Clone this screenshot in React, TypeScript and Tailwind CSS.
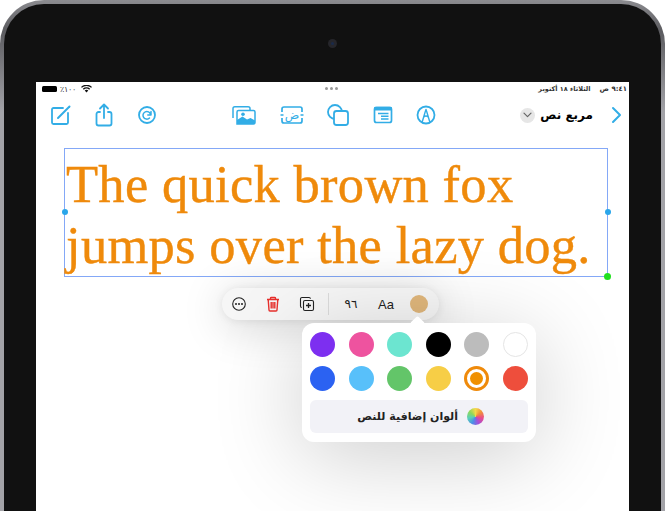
const ICON = "#32ade6";

const ROW_ONE = ["bg-[#7d2ff0]", "bg-[#ee539f]", "bg-[#6ce5d0]", "bg-black", "bg-[#bcbcbc]", "bg-white border border-[#e5e5e5]"];
const ROW_TWO = ["bg-[#2b62f2]", "bg-[#58c0fa]", "bg-[#63c569]", "bg-[#f7ce46]", "selected", "bg-[#ee4e3c]"];

function ToolIcon({ children, className }: { children: React.ReactNode; className?: string }) {
  return (
    <svg width="24" height="24" viewBox="0 0 24 24" fill="none" stroke={ICON} strokeWidth="1.8" strokeLinecap="round" strokeLinejoin="round" className={className}>
      {children}
    </svg>
  );
}

function StatusBar() {
  return (
    <div className="relative flex h-[14px] items-center justify-between pl-[4px] pr-[2px] text-[8px] text-black">
      <div className="flex items-center gap-[3px]">
        <span className="flex h-[7px] w-[17px] items-center justify-end">
          <span className="h-[6px] w-[15px] rounded-[1.5px] bg-black" />
        </span>
        <span className="text-[8px] leading-none text-[#333]">٪١٠٠</span>
        <svg width="11" height="8" viewBox="0 0 11 8" className="ml-[2px]">
          <path d="M5.5 7.6 3.7 5.6a2.6 2.6 0 0 1 3.6 0ZM2.8 4.7l-1-1a5.4 5.4 0 0 1 7.4 0l-1 1a4 4 0 0 0-5.4 0ZM.9 2.8 0 1.9a7.9 7.9 0 0 1 11 0l-.9.9a6.6 6.6 0 0 0-9.2 0Z" fill="#111" />
        </svg>
      </div>
      <div className="absolute left-[289px] top-[5px] flex gap-[2px]">
        <span className="h-[3px] w-[3px] rounded-full bg-[#999]" />
        <span className="h-[3px] w-[3px] rounded-full bg-[#999]" />
        <span className="h-[3px] w-[3px] rounded-full bg-[#999]" />
      </div>
      <div dir="rtl" className="flex items-center gap-[9px] font-['DejaVu_Sans',sans-serif] text-[7px] font-bold leading-none text-[#333]">
        <span>٩:٤١ ص</span>
        <span className="text-[6.5px]">الثلاثاء ١٨ أكتوبر</span>
      </div>
    </div>
  );
}

function Toolbar() {
  return (
    <div className="flex h-[38px] items-center pl-[12px] pr-[5px]">
      <div className="flex items-center gap-[20px]">
        <ToolIcon>
          <path d="M15 5H5.500A1.500 1.500 0 0 0 4 6.500V19.500A1.500 1.500 0 0 0 5.500 21H18.500A1.500 1.500 0 0 0 20 19.500V10" />
          <path d="M10 15 21.500 3.500" strokeWidth="2" />
        </ToolIcon>
        <ToolIcon>
          <path d="M8 9H6.500A2 2 0 0 0 4.500 11V20.500A2 2 0 0 0 6.500 22.500H17.500A2 2 0 0 0 19.500 20.500V11A2 2 0 0 0 17.500 9H16" />
          <path d="M12 15V2M8 5.500 12 1.500 16 5.500" />
        </ToolIcon>
        <ToolIcon className="-ml-[1px]">
          <circle cx="12" cy="12" r="8" />
          <path d="M15.500 11.500A3.800 3.800 0 1 0 14.500 15M16 8.500V12H12.800" strokeWidth="1.500" />
        </ToolIcon>
      </div>
      <div className="ml-[72px] flex items-center">
        <svg width="26" height="24" viewBox="0 0 24 24" fill="none" stroke={ICON} strokeWidth="1.500">
          <path d="M1 15V5.500A1.800 1.800 0 0 1 2.800 3.700H16A1.800 1.800 0 0 1 18 5.500V7" />
          <path d="M5 21H21.500A1.500 1.500 0 0 0 23 19.500V9A1.500 1.500 0 0 0 21.500 7.500H6.500A1.500 1.500 0 0 0 5 9Z" />
          <path d="M5 21V17L10.500 13.500 15 16.500 18.500 15 23 17.500V21Z" fill={ICON} stroke="none" />
          <circle cx="11" cy="11.300" r="1.800" fill={ICON} stroke="none" />
        </svg>
        <svg width="24" height="24" viewBox="0 0 24 24" fill="none" stroke={ICON} strokeWidth="1.700" className="ml-[23px]">
          <path d="M2 9V6A2 2 0 0 1 4 4H20A2 2 0 0 1 22 6V9M22 15V18A2 2 0 0 1 20 20H4A2 2 0 0 1 2 18V15" />
          <path d="M0.500 12H3.500M20.500 12H23.500" />
          <text x="12" y="16" textAnchor="middle" fontSize="12" fill={ICON} stroke="none" fontFamily="DejaVu Sans, sans-serif">ض</text>
        </svg>
        <ToolIcon className="ml-[22px]">
          <circle cx="9" cy="9" r="7" />
          <rect x="8" y="8" width="14" height="14" rx="2.500" fill="#fff" />
        </ToolIcon>
        <svg width="24" height="24" viewBox="0 0 24 24" fill="none" className="ml-[21px]">
          <rect x="3.500" y="4.500" width="17" height="15" rx="2" stroke={ICON} strokeWidth="1.700" />
          <path d="M3 7.500H21V4.500A1.500 1.500 0 0 0 19.500 3.800H4.500A1.500 1.500 0 0 0 3 4.500Z" fill={ICON} />
          <path d="M7 10.500H17.500M10 13.300H17.500M10 16H17.500" stroke={ICON} strokeWidth="1.400" />
        </svg>
        <ToolIcon className="ml-[19px]">
          <circle cx="12" cy="12" r="8.500" />
          <path d="M8.200 19 11 9.500 12 6.500 13 9.500 15.800 19M9.700 14A3 3 0 0 1 14.300 14" strokeWidth="1.400" />
        </ToolIcon>
      </div>
      <div dir="rtl" className="ml-auto flex items-center font-['DejaVu_Sans',sans-serif]">
        <svg width="16" height="20" viewBox="0 0 16 20" fill="none" stroke={ICON} strokeWidth="2" strokeLinecap="round" strokeLinejoin="round" className="ml-[15px]">
          <path d="M5 3 12 10 5 17" />
        </svg>
        <span className="text-[12px] font-bold leading-none text-black">مربع نص</span>
        <span className="mr-[5px] flex h-[15px] w-[15px] items-center justify-center rounded-full bg-[#e6e6e6]">
          <svg width="9" height="6" viewBox="0 0 9 6" fill="none" stroke="#666" strokeWidth="1.200" strokeLinecap="round" strokeLinejoin="round">
            <path d="M1 1.200 4.500 4.700 8 1.200" />
          </svg>
        </span>
      </div>
    </div>
  );
}

function TextBox() {
  return (
    <div className="relative ml-[28px] h-[129px] w-[544px] border border-[#84a8f7] pl-[1px]">
      <p className="whitespace-nowrap pt-[5px] font-['Liberation_Serif',serif] text-[52.500px] leading-[61px] tracking-[0.3px] text-[#ef8a0b] [-webkit-text-stroke:0.4px_#ef8a0b]">
        The quick brown fox
        <br />
        jumps over the lazy dog.
      </p>
      <span className="absolute -left-[3.500px] top-[60px] h-[6px] w-[6px] rounded-full bg-[#2aa6ea]" />
      <span className="absolute -right-[3.500px] top-[60px] h-[6px] w-[6px] rounded-full bg-[#2aa6ea]" />
      <span className="absolute -bottom-[4px] -right-[4px] h-[7px] w-[7px] rounded-full bg-[#22e01f]" />
    </div>
  );
}

function FloatBar() {
  return (
    <div className="absolute left-[186px] top-[154px] flex h-[32px] w-[217px] items-center rounded-full bg-[#f6f6f6] shadow-[0_1px_8px_rgba(0,0,0,0.08),0_6px_44px_rgba(0,0,0,0.18)]">
      <svg width="16" height="16" viewBox="0 0 16 16" fill="none" className="ml-[9px]">
        <circle cx="8" cy="8" r="6.300" stroke="#222" strokeWidth="1.100" />
        <circle cx="5" cy="8" r="1" fill="#222" />
        <circle cx="8" cy="8" r="1" fill="#222" />
        <circle cx="11" cy="8" r="1" fill="#222" />
      </svg>
      <svg width="16" height="16" viewBox="0 0 16 16" fill="none" stroke="#e8302c" strokeWidth="1.400" strokeLinejoin="round" className="ml-[18px]">
        <path d="M2 3.500H14M5.500 3.500V2.200A.8.8 0 0 1 6.300 1.500H9.700A.8.8 0 0 1 10.500 2.200V3.500" />
        <path d="M3.200 3.500 4 14A1 1 0 0 0 5 15H11A1 1 0 0 0 12 14L12.800 3.500M6.200 6V12.500M8 6V12.500M9.800 6V12.500" />
      </svg>
      <svg width="16" height="16" viewBox="0 0 16 16" fill="none" stroke="#222" strokeWidth="1.100" className="ml-[18px]">
        <path d="M2.800 11.500A1.500 1.500 0 0 1 1.500 10V3A1.500 1.500 0 0 1 3 1.500H10A1.500 1.500 0 0 1 11.500 2.800" />
        <rect x="4.500" y="4.500" width="10" height="10" rx="1.500" />
        <path d="M9.500 7V12M7 9.500H12" strokeWidth="1.300" />
      </svg>
      <span className="ml-[13px] h-[22px] w-px bg-[#dcdcdc]" />
      <span className="ml-[14px] w-[16px] text-center font-['DejaVu_Sans',sans-serif] text-[12px] leading-none text-[#222]">٩٦</span>
      <span className="ml-[19px] font-['Liberation_Sans',sans-serif] text-[13px] leading-none text-[#222]">Aa</span>
      <span className="ml-[16px] h-[18px] w-[18px] rounded-full bg-[#e0b77c]" />
    </div>
  );
}

function Swatch({ color }: { color: string }) {
  if (color === "selected") {
    return (
      <span className="flex h-[25px] w-[25px] items-center justify-center rounded-full border-[3px] border-[#ef8a0b] bg-white">
        <span className="h-[13px] w-[13px] rounded-full bg-[#f09000]" />
      </span>
    );
  }
  return <span className={`h-[25px] w-[25px] rounded-full ${color}`} />;
}

function ColorPopover() {
  return (
    <div className="absolute left-[266px] top-[189px] h-[119px] w-[234px] rounded-[12px] bg-white px-[8px] pt-[9px] shadow-[0_14px_90px_rgba(0,0,0,0.2)]">
      <span className="absolute left-[110px] -top-[5px] h-[11px] w-[11px] rotate-45 rounded-[2px] bg-white" />
      <div className="flex justify-between">
        {ROW_ONE.map((c) => (
          <Swatch key={c} color={c} />
        ))}
      </div>
      <div className="mt-[9px] flex justify-between">
        {ROW_TWO.map((c) => (
          <Swatch key={c} color={c} />
        ))}
      </div>
      <div dir="rtl" className="mt-[9px] flex h-[33px] items-center rounded-[6px] bg-[#f2f2f7] pr-[44px]">
        <span className="h-[17px] w-[17px] rounded-full bg-[conic-gradient(#f5d94a,#f0913a,#ea4b8b,#a54fd8,#4a8fe8,#5bd0b8,#8fd85a,#f5d94a)]" />
        <span className="mr-[9px] font-['DejaVu_Sans',sans-serif] text-[11px] font-bold leading-none text-[#222]">ألوان إضافية للنص</span>
      </div>
    </div>
  );
}

export default function App() {
  return (
    <div className="h-[513px] w-[665px] overflow-hidden bg-white">
      <div className="h-[511px] rounded-t-[44px] bg-[linear-gradient(to_bottom,#8c8c90,#5c5c60_6%,#a3a3a8_22%)] px-[4px] pt-[4px]">
        <div className="h-[507px] rounded-t-[40px] bg-[#111]">
          <div className="flex h-[78px] justify-center pt-[35px]">
            <span className="flex h-[9px] w-[9px] items-center justify-center rounded-full bg-[#26262b]">
              <span className="h-[3px] w-[3px] rounded-full bg-[#1a2a4a]" />
            </span>
          </div>
          <div className="mx-[32px] h-[429px] overflow-hidden bg-white">
            <StatusBar />
            <Toolbar />
            <div className="relative h-[377px] pt-[14px]">
              <TextBox />
              <FloatBar />
              <ColorPopover />
            </div>
          </div>
        </div>
      </div>
    </div>
  );
}
